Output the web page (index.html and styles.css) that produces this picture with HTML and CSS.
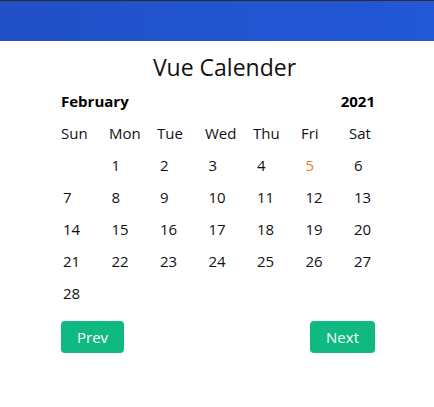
FILE: index.html
```html
<!DOCTYPE html>
<html lang="en">
<head>
<meta charset="utf-8">
<title>Vue Calender</title>
<link rel="stylesheet" href="styles.css">
</head>
<body>
<header class="topbar"></header>
<main class="page">
  <h1 class="title">Vue Calender</h1>
  <section class="calendar">
    <div class="cal-head">
      <span class="month">February</span>
      <span class="year">2021</span>
    </div>
    <div class="weekdays">
      <span>Sun</span><span>Mon</span><span>Tue</span><span>Wed</span><span>Thu</span><span>Fri</span><span>Sat</span>
    </div>
    <div class="days">
      <span></span><span>1</span><span>2</span><span>3</span><span>4</span><span class="today">5</span><span>6</span>
      <span>7</span><span>8</span><span>9</span><span>10</span><span>11</span><span>12</span><span>13</span>
      <span>14</span><span>15</span><span>16</span><span>17</span><span>18</span><span>19</span><span>20</span>
      <span>21</span><span>22</span><span>23</span><span>24</span><span>25</span><span>26</span><span>27</span>
      <span>28</span>
    </div>
    <div class="nav">
      <button class="btn" type="button">Prev</button>
      <button class="btn" type="button">Next</button>
    </div>
  </section>
</main>
</body>
</html>
```
FILE: styles.css
```css
* { box-sizing: border-box; }
body {
  margin: 0;
  background: #fff;
  color: #111;
  font-family: "Open Sans", "Noto Sans", sans-serif;
  font-size: 15px;
}
.topbar {
  height: 41px;
  border-top: 1px solid #2b2b2b;
  background: linear-gradient(90deg, #214fc6 0%, #2155d0 50%, #2257d6 100%);
}
.page { padding-top: 11px; }
.title {
  margin: 0;
  padding-left: 15px;
  text-align: center;
  font-weight: 400;
  font-size: 23px;
  line-height: 30px;
  color: #111;
}
.calendar {
  margin-left: 61px;
  width: 314px;
  padding-top: 9px;
}
.cal-head {
  display: flex;
  justify-content: space-between;
  font-weight: 700;
  font-size: 15px;
  line-height: 20px;
  color: #000;
}
.weekdays {
  display: grid;
  grid-template-columns: repeat(7, 48px);
  margin-top: 12px;
  line-height: 20px;
}
.days {
  display: grid;
  grid-template-columns: repeat(7, 48.5px);
  grid-auto-rows: 32px;
  margin-top: 12px;
  padding-left: 2px;
  line-height: 20px;
}
.days .today { color: #e67e22; }
.nav {
  display: flex;
  justify-content: space-between;
  margin-top: 6px;
}
.btn {
  height: 32px;
  padding: 0 16px;
  border: 0;
  border-radius: 4px;
  background: #10b981;
  color: #fff;
  font-family: inherit;
  font-size: 15px;
}
```
